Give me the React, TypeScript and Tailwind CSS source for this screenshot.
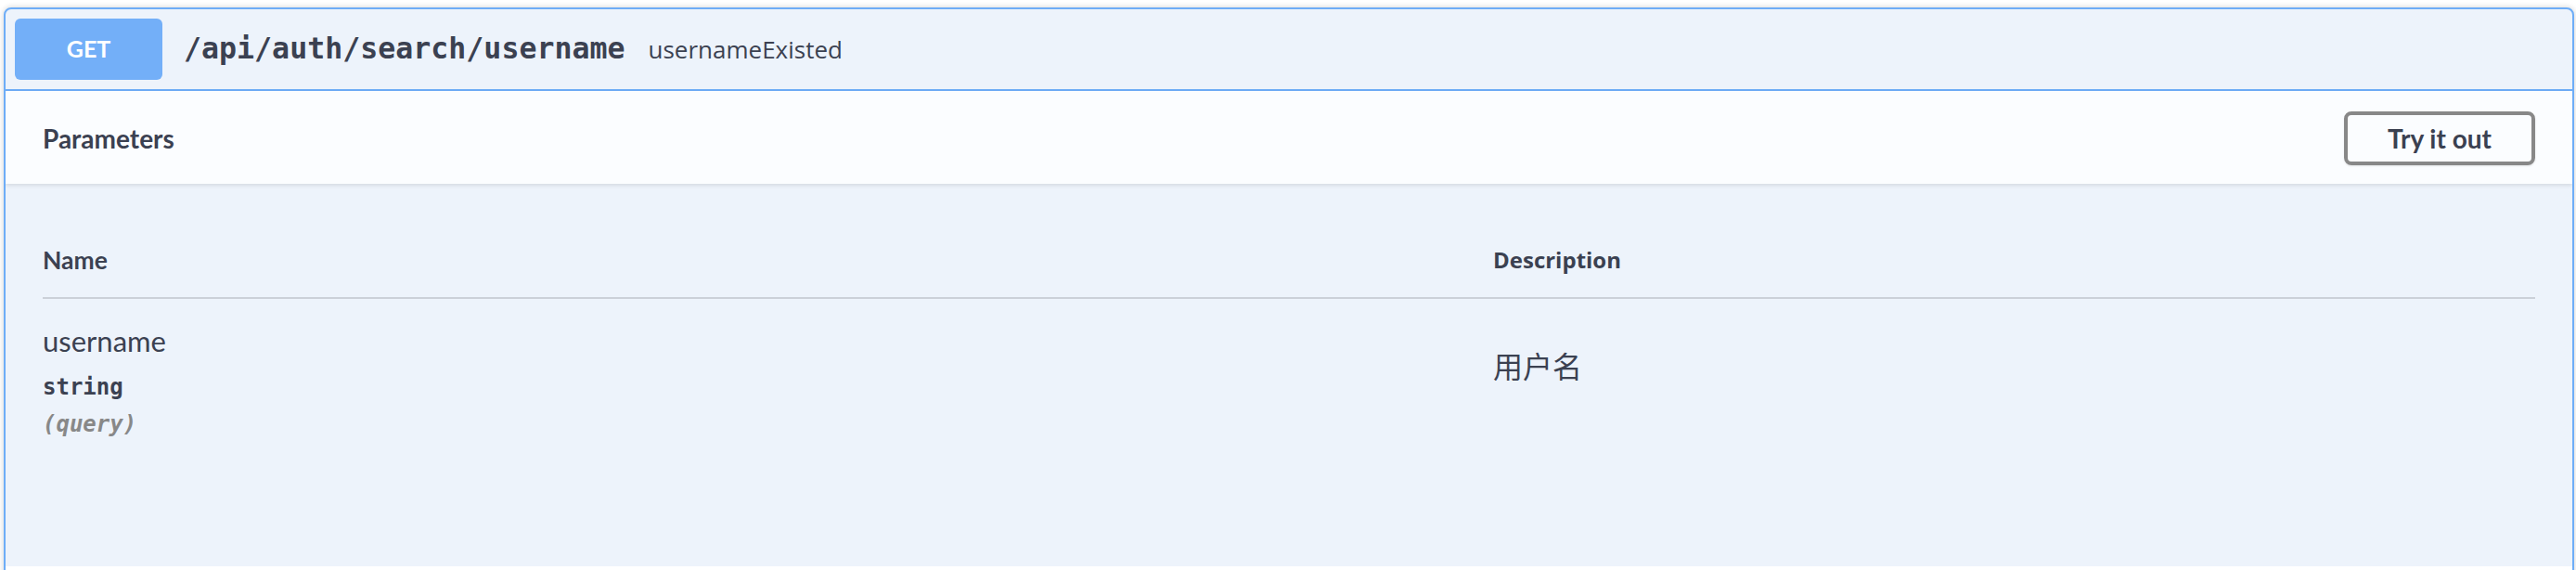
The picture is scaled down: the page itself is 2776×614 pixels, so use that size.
const title = "font-[family-name:Lato,'Noto_Sans',sans-serif]";
const mono = "font-[family-name:'DejaVu_Sans_Mono',monospace]";
const open = "font-[family-name:'Open_Sans',sans-serif]";

function MethodBadge() {
  return (
    <div className={`flex h-[66px] w-[159px] items-center justify-center rounded-[6px] bg-[#73aff8] text-[25px] font-bold text-white ${title}`}>
      GET
    </div>
  );
}

export default function App() {
  return (
    <div className="h-[614px] w-full overflow-hidden bg-white text-[#3b4151]">
      <div className="ml-[4px] mr-[2px] mt-[8px] flex h-[620px] flex-col overflow-hidden rounded-[8px] border-2 border-[#6eadf7] bg-[#edf3fb] shadow-[0_0_6px_rgba(0,0,0,0.19)]">
        {/* Summary */}
        <div className="flex items-center border-b-2 border-[#6eadf7] p-[10px]">
          <MethodBadge />
          <span className={`pl-[23px] text-[31.6px] font-semibold leading-none ${mono}`}>/api/auth/search/username</span>
          <span className={`pl-[25px] text-[26px] leading-none ${open}`}>usernameExisted</span>
        </div>

        {/* Parameters header */}
        <div className="relative z-10 flex h-[100px] items-center justify-between bg-[#fbfdff] px-[40px] pt-[2px] shadow-[0_2px_4px_rgba(0,0,0,0.1)]">
          <h4 className={`text-[28px] font-bold ${title}`}>Parameters</h4>
          <button className={`h-[58px] w-[206px] rounded-[8px] border-4 border-[#888] bg-transparent text-[28px] font-bold shadow-[0_1px_2px_rgba(0,0,0,0.1)] ${title}`}>
            Try it out
          </button>
        </div>

        {/* Table */}
        <div className="h-[412px] shrink-0 px-[40px] pt-[40px]">
          <div className="flex border-b-2 border-[#cbd0d8] pb-[22px] pt-[24px]">
            <div className={`w-[1563px] text-[26.5px] font-bold leading-[36px] ${title}`}>Name</div>
            <div className={`text-[24px] font-bold leading-[36px] ${open}`}>Description</div>
          </div>
          <div className="flex">
            <div className="w-[1563px] pt-[25px]">
              <div className={`text-[31px] leading-[40px] ${title}`}>username</div>
              <div className={`mt-[14px] text-[24px] font-semibold leading-[32px] ${mono}`}>string</div>
              <div className={`mt-[8px] text-[24px] font-semibold italic leading-[32px] text-[#888] ${mono}`}>(query)</div>
            </div>
            <div className="pt-[51px]">
              <p className="font-[family-name:'Noto_Sans_CJK_SC',sans-serif] text-[32px] leading-[40px]">用户名</p>
            </div>
          </div>
        </div>
        <div className="flex-1 bg-white" />
      </div>
    </div>
  );
}
